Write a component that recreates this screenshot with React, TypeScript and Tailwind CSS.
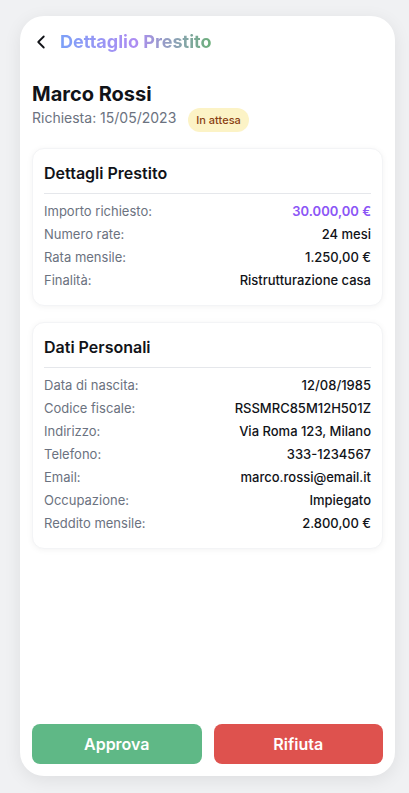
import React from "react";
import { ChevronLeft } from "lucide-react";

const Row = ({ label, value, accent }: { label: string; value: string; accent?: boolean }) => (
  <div className="flex items-center justify-between text-[13px] leading-[20px]">
    <span className="text-[#6b7280]">{label}</span>
    <span className={accent ? "font-semibold text-[#8b55f6]" : "font-medium text-[#111318]"}>{value}</span>
  </div>
);

const Section = ({ title, rows }: { title: string; rows: { label: string; value: string; accent?: boolean }[] }) => (
  <div className="rounded-xl border border-[#f3f4f6] bg-white px-[11px] pt-3 pb-[15px] shadow-[0_1px_6px_rgba(0,0,0,0.05)]">
    <h2 className="border-b border-[#e5e7eb] pb-2 text-[16px] font-semibold leading-[24px] text-[#111318]">{title}</h2>
    <div className="mt-[7px] flex flex-col gap-[3px]">
      {rows.map((r) => (
        <Row key={r.label} {...r} />
      ))}
    </div>
  </div>
);

export default function App() {
  return (
    <div
      className="min-h-[793px] w-full bg-[#f0f1f3] pt-4"
      style={{ fontFamily: "Inter, 'Noto Sans', sans-serif" }}
    >
      <div className="ml-5 flex h-[760px] w-[375px] flex-col rounded-[24px] bg-white shadow-[0_4px_18px_rgba(0,0,0,0.08)]">
        <div className="flex-1 px-3 pt-[12px]">
          <div className="flex h-7 items-center gap-2">
            <ChevronLeft size={22} strokeWidth={2} className="-ml-[2px] text-[#111318]" />
            <span className="bg-gradient-to-r from-[#7ba0f8] via-[#ad8cf2] to-[#6aae78] bg-clip-text text-[18px] font-bold leading-[28px] text-transparent">
              Dettaglio Prestito
            </span>
          </div>
          <div className="mt-[24px]">
            <h1 className="text-[20px] font-bold leading-[28px] text-[#111318]">Marco Rossi</h1>
            <div className="flex items-start gap-3">
              <span className="text-[14px] leading-[20px] text-[#6b7280]">Richiesta: 15/05/2023</span>
              <span className="rounded-full bg-[#fcf3c6] px-2 py-1 text-[11px] font-medium leading-[16px] text-[#8a4113]">
                In attesa
              </span>
            </div>
          </div>
          <div className="mt-4 flex flex-col gap-4">
            <Section
              title="Dettagli Prestito"
              rows={[
                { label: "Importo richiesto:", value: "30.000,00 €", accent: true },
                { label: "Numero rate:", value: "24 mesi" },
                { label: "Rata mensile:", value: "1.250,00 €" },
                { label: "Finalità:", value: "Ristrutturazione casa" },
              ]}
            />
            <Section
              title="Dati Personali"
              rows={[
                { label: "Data di nascita:", value: "12/08/1985" },
                { label: "Codice fiscale:", value: "RSSMRC85M12H501Z" },
                { label: "Indirizzo:", value: "Via Roma 123, Milano" },
                { label: "Telefono:", value: "333-1234567" },
                { label: "Email:", value: "marco.rossi@email.it" },
                { label: "Occupazione:", value: "Impiegato" },
                { label: "Reddito mensile:", value: "2.800,00 €" },
              ]}
            />
          </div>
        </div>
        <div className="flex gap-3 p-3">
          <button className="h-10 flex-1 rounded-lg bg-[#5fb886] text-[16px] font-semibold text-white">Approva</button>
          <button className="h-10 flex-1 rounded-lg bg-[#de524e] text-[16px] font-semibold text-white">Rifiuta</button>
        </div>
      </div>
    </div>
  );
}
